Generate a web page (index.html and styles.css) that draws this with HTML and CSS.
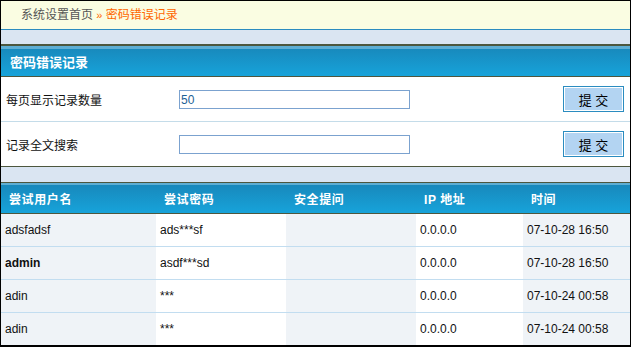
FILE: index.html
```html
<!DOCTYPE html>
<html lang="zh-CN">
<head>
    <meta charset="UTF-8">
    <title>密码错误记录</title>
    <link rel="stylesheet" href="styles.css">
</head>
<body>
    <div class="frame">
        <!-- breadcrumb -->
        <div class="crumb">系统设置首页 <span class="sep">»</span> <span class="current">密码错误记录</span></div>
        <div class="band"></div>

        <div class="bar">密码错误记录</div>

        <div class="form-row">
            <label class="form-label">每页显示记录数量</label>
            <input class="text-input" type="text" value="50">
            <button class="submit-btn">提 交</button>
        </div>
        <div class="form-row last">
            <label class="form-label">记录全文搜索</label>
            <input class="text-input" type="text" value="">
            <button class="submit-btn">提 交</button>
        </div>
        <div class="band low"></div>

        <table class="log-table">
            <colgroup>
                <col style="width:155px">
                <col style="width:130px">
                <col style="width:130px">
                <col style="width:107px">
                <col style="width:107px">
            </colgroup>
            <thead>
                <tr>
                    <th>尝试用户名</th>
                    <th>尝试密码</th>
                    <th>安全提问</th>
                    <th>IP 地址</th>
                    <th>时间</th>
                </tr>
            </thead>
            <tbody>
                <tr>
                    <td>adsfadsf</td>
                    <td>ads***sf</td>
                    <td></td>
                    <td>0.0.0.0</td>
                    <td>07-10-28 16:50</td>
                </tr>
                <tr>
                    <td><strong>admin</strong></td>
                    <td>asdf***sd</td>
                    <td></td>
                    <td>0.0.0.0</td>
                    <td>07-10-28 16:50</td>
                </tr>
                <tr>
                    <td>adin</td>
                    <td>***</td>
                    <td></td>
                    <td>0.0.0.0</td>
                    <td>07-10-24 00:58</td>
                </tr>
                <tr>
                    <td>adin</td>
                    <td>***</td>
                    <td></td>
                    <td>0.0.0.0</td>
                    <td>07-10-24 00:58</td>
                </tr>
            </tbody>
        </table>
    </div>
</body>
</html>
```

FILE: styles.css
```css
body {
    margin: 0;
    font-family: "Liberation Sans", "Noto Sans CJK SC", sans-serif;
    font-size: 12px;
    color: #111;
    background-color: #fff;
}
.frame {
    width: 629px;
    border: 1px solid #000;
    border-bottom-width: 2px;
}

/* breadcrumb */
.crumb {
    height: 28px;
    line-height: 29px;
    padding-left: 20px;
    background-color: #fafde2;
    border-bottom: 1px solid #2b8cc0;
    color: #555;
}
.crumb .sep {
    color: #f60;
    font-size: 11px;
}
.crumb .current {
    color: #f60;
}

.band {
    height: 14px;
    background-color: #dae5f2;
    border-bottom: 1px solid #4d573e;
}
.band.low {
    height: 15px;
}

/* section title bar */
.bar {
    height: 27px;
    line-height: 28px;
    padding: 3px 0 0 9px;
    border-top: 1px solid #4d573e;
    border-bottom: 1px solid #4d573e;
    box-shadow: inset 0 3px 0 #5eaed4;
    background: linear-gradient(#1887ba, #17a3da);
    color: #fff;
    font-weight: bold;
    font-size: 13px;
}

/* search rows */
.form-row {
    display: flex;
    align-items: center;
    height: 44px;
    padding: 0 6px 0 5px;
    border-bottom: 1px solid #c4dce9;
}
.form-row.last {
    border-bottom-color: #4d573e;
}
.form-label {
    width: 173px;
}
.text-input {
    width: 227px;
    height: 17px;
    margin: 1px 0 0;
    padding: 0 1px;
    border: 1px solid #7ba2cf;
    font-family: inherit;
    font-size: 12px;
    color: #1d6195;
}
.submit-btn {
    margin-left: auto;
    width: 61px;
    height: 26px;
    border: 1px solid #2b8cc0;
    box-shadow: inset 0 0 0 1px #fff;
    background-color: #b3d4f2;
    font-family: inherit;
    font-size: 13px;
    color: #000;
    padding: 0;
}

/* log list */
.log-table {
    width: 629px;
    border-collapse: collapse;
    table-layout: fixed;
}
.log-table th {
    height: 30px;
    padding: 0 0 0 8px;
    text-align: left;
    border-bottom: 1px solid #4d573e;
    box-shadow: inset 0 2px 0 #5eaed4;
    background: linear-gradient(#1887ba, #17a3da);
    color: #fff;
    font-size: 12px;
    letter-spacing: 0.6px;
}
.log-table td {
    height: 32px;
    padding: 0 0 0 4px;
    border-bottom: 1px solid #c2ddf0;
    background-color: #eff3f7;
    color: #111;
}
.log-table td:nth-child(2),
.log-table td:nth-child(4) {
    background-color: #fff;
}
.log-table tr:last-child td {
    border-bottom: none;
}
```
